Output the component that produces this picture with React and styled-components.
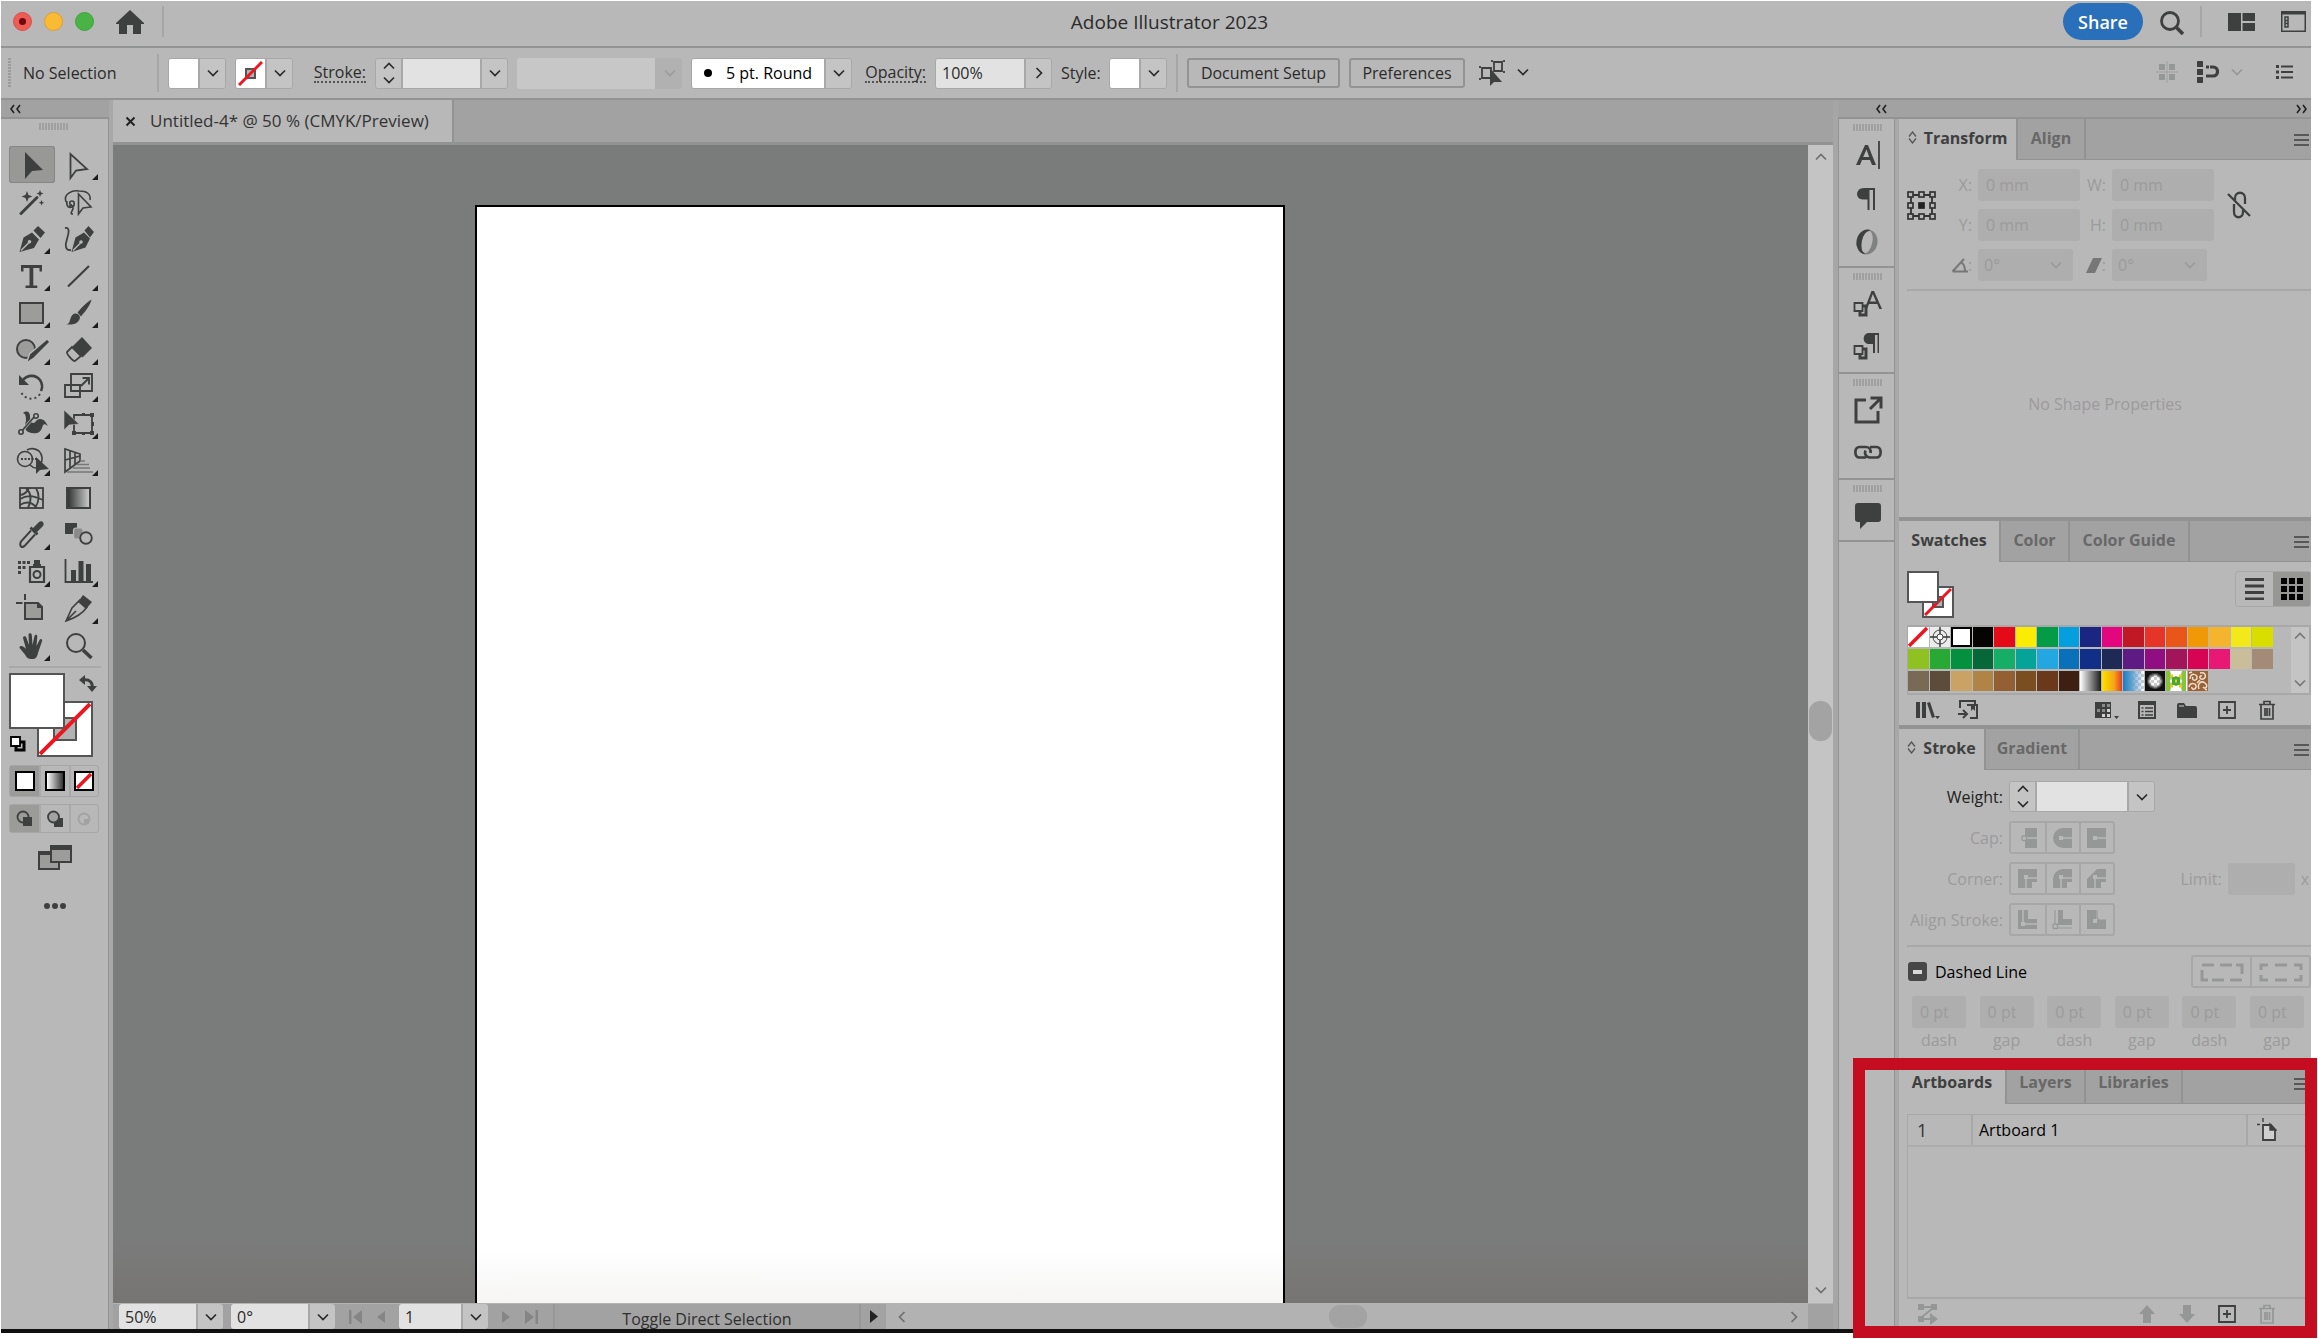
import React from "react";
import styled, { createGlobalStyle, css } from "styled-components";

const c = {
  base: "#b8b8b8",
  strip: "#a2a2a2",
  line: "#929493",
  soft: "#a8a8a8",
  ink: "#3e403f",
  field: "#e2e2e2",
  button: "#c4c4c4",
  faint: "#9b9b9b",
  canvas: "#7a7c7b",
  red: "#ed1620",
};

const Global = createGlobalStyle`
  * { box-sizing: border-box; }
  body { margin: 0; background: #fff; font-family: "Open Sans", "Noto Sans", sans-serif; font-size: 16px; line-height: 20px; color: #2b2b2b; }
  button, input, select { font: inherit; color: inherit; margin: 0; padding: 0; border: 0; background: none; border-radius: 0; }
  svg { display: block; flex: none; }
`;

/* ---------- frame ---------- */
const Screen = styled.div`
  position: relative;
  height: 100vh;
  padding: 1px 7px 6px 1px;
  display: flex;
  flex-direction: column;
  overflow: hidden;
`;
const Frame = styled.div`
  flex: 1;
  min-height: 0;
  display: flex;
  flex-direction: column;
  background: ${c.base};
  border-bottom: 4px solid #101010;
`;
const TitleBar = styled.header`
  height: 47px;
  display: flex;
  align-items: center;
  padding: 0 5px 4px 12px;
  border-bottom: 2px solid ${c.line};
`;
const TitleSide = styled.div`
  flex: 1;
  display: flex;
  align-items: center;
  justify-content: ${(p) => (p.$end ? "flex-end" : "flex-start")};
`;
const Title = styled.h1`
  margin: 0;
  font-size: 19px;
  font-weight: 400;
  line-height: 24px;
  padding-left: 20px;
`;
const Light = styled.button`
  width: 19px;
  height: 19px;
  margin-right: 12px;
  border-radius: 50%;
  background: ${(p) => p.$color};
  border: 1px solid ${(p) => p.$edge};
  display: grid;
  place-items: center;
  &::after {
    content: "";
    width: 7px;
    height: 7px;
    border-radius: 50%;
    background: ${(p) => p.$dot || "transparent"};
  }
`;
const Bare = styled.button`
  display: grid;
  place-items: center;
  min-width: ${(p) => p.$w || 24}px;
  height: ${(p) => p.$h || 24}px;
  color: ${(p) => (p.$dim ? "#959796" : c.ink)};
`;
const Rule = styled.span`
  width: 2px;
  height: ${(p) => p.$h}px;
  background: #a6a6a6;
`;
const Share = styled.button`
  width: 80px;
  height: 37px;
  border-radius: 19px;
  background: #2a6fba;
  color: #fff;
  font-size: 18px;
  font-weight: 600;
  margin-right: 16px;
`;
const HomeButton = styled(Bare)`margin: 0 18px 0 10px;`;
const SideRule = styled(Rule)`margin: 0 26px 0 16px;`;
const LastBare = styled(Bare)`margin-left: 26px;`;

/* ---------- control bar ---------- */
const ControlBar = styled.div`
  height: 52px;
  display: flex;
  align-items: center;
  gap: 9px;
  padding: 0 18px 0 7px;
  border-bottom: 2px solid ${c.line};
`;
const VGrip = styled.span`
  width: 3px;
  height: 30px;
  background: repeating-linear-gradient(#9c9c9c 0 2px, transparent 2px 3px);
`;
const Status = styled.span`width: 128px; padding-left: 3px;`;
const BarLabel = styled.label`
  width: ${(p) => p.$w}px;
  text-align: right;
  white-space: nowrap;
  line-height: 18px;
  span { ${(p) => p.$dotted && css`border-bottom: 2px dotted #555; display: inline-block;`} }
`;
const Combo = styled.span`
  display: flex;
  align-items: stretch;
  height: ${(p) => p.$h || 31}px;
  border: ${(p) => (p.$flat ? 0 : 1)}px solid ${c.soft};
  border-radius: 3px;
  overflow: hidden;
  opacity: ${(p) => (p.$off ? 0.8 : 1)};
`;
const Chip = styled.button`
  width: 29px;
  background: #fff;
  display: grid;
  place-items: center;
`;
const Arrow = styled.button`
  width: 27px;
  border-left: 2px solid ${c.soft};
  background: ${(p) => (p.disabled ? "#b0b0b0" : c.button)};
  color: ${(p) => (p.disabled ? "#959595" : "#2b2b2b")};
  display: grid;
  place-items: center;
  ${(p) => p.disabled && css`border-color: #b0b0b0;`}
`;
const Stepper = styled.span`
  width: 27px;
  display: flex;
  flex-direction: column;
  background: ${c.button};
  border-right: 2px solid ${c.soft};
  button { flex: 1; display: grid; place-items: center; }
`;
const Text = styled.input`
  width: ${(p) => p.$w}px;
  padding-left: 6px;
  background: ${c.field};
  &:disabled { background: #cbcbcb; }
`;
const BrushPick = styled.span`
  display: flex;
  align-items: center;
  width: 132px;
  background: #fff;
  color: #000;
  padding-left: 12px;
  gap: 10px;
`;
const BrushSelect = styled.select`
  appearance: none;
  flex: 1;
  font-weight: 500;
  height: 100%;
  padding-left: 4px;
`;
const Outlined = styled.button`
  height: 30px;
  width: ${(p) => p.$w}px;
  border: 2px solid ${c.line};
  border-radius: 3px;
`;
const Fill = styled.span`flex: 1;`;
const BarTools = styled.span`
  display: flex;
  align-items: center;
  gap: 6px;
  padding-bottom: 2px;
`;

/* ---------- workspace ---------- */
const Workspace = styled.div`
  flex: 1;
  min-height: 0;
  display: flex;
`;
const Strip = styled.div`
  height: 19px;
  background: ${c.strip};
  border-bottom: 2px solid ${c.line};
  display: flex;
  align-items: center;
  justify-content: space-between;
  padding: 0 3px 0 ${(p) => p.$pl || 8}px;
`;
const HGrip = styled.span`
  display: block;
  width: 30px;
  height: 7px;
  margin: ${(p) => p.$m || "0 auto"};
  background: repeating-linear-gradient(90deg, #a0a0a0 0 2px, transparent 2px 3px);
`;
const Toolbox = styled.aside`
  width: 112px;
  border-right: 4px solid ${c.soft};
  box-shadow: inset -1px 0 ${c.line};
`;
const ToolGrid = styled.div`
  display: grid;
  grid-template-columns: 48px 48px;
  padding: 16px 0 2px 6px;
`;
const Tool = styled.button`
  position: relative;
  height: 37px;
  display: grid;
  place-items: center;
  color: ${c.ink};
  ${(p) => p.$on && css`background: #989997; box-shadow: inset 0 0 0 1px #858685; border-radius: 3px; margin: 0 0 0 2px;`}
  ${(p) => p.$more && css`&::after {
    content: "";
    position: absolute;
    right: 5px;
    bottom: 3px;
    border: 3px solid #1c1c1c;
    border-top-color: transparent;
    border-left-color: transparent;
  }`}
`;
const ToolRule = styled.div`
  height: 2px;
  background: #a9a9a9;
  margin: 0 8px 5px;
`;
const ColorArea = styled.div`
  position: relative;
  height: 85px;
  margin: 0 8px;
`;
const ColorSquare = styled.button`
  position: absolute;
  left: ${(p) => p.$at}px;
  top: ${(p) => p.$at}px;
  width: ${(p) => p.$s}px;
  height: ${(p) => p.$s}px;
  background: #fff;
  border: 2px solid #555;
`;
const Corner = styled.button`
  position: absolute;
  ${(p) => (p.$top ? "right: 4px; top: 2px;" : "left: 0; bottom: 5px;")}
`;
const ModeRow = styled.div`
  display: grid;
  grid-template-columns: 1fr 1fr 1fr;
  width: 90px;
  height: ${(p) => p.$h}px;
  margin: 7px 0 0 8px;
  border: 1px solid #a6a6a6;
  border-radius: 3px;
`;
const Mode = styled.button`
  display: grid;
  place-items: center;
  color: ${(p) => (p.disabled ? "#a2a2a2" : c.ink)};
  background: ${(p) => (p.$on ? "#9b9b99" : "none")};
  & + & { border-left: 2px solid #a9a9a9; }
`;
const ModeColor = styled.span`
  width: 20px;
  height: 20px;
  border: 2px solid #000;
  background: ${(p) => p.$bg};
`;
const ToolFoot = styled.div`
  display: flex;
  flex-direction: column;
  align-items: center;
  gap: 25px;
  padding-top: 12px;
`;

const Main = styled.main`
  flex: 1;
  min-width: 0;
  display: flex;
  flex-direction: column;
`;
const DocTabs = styled.div`
  height: 45px;
  background: ${c.strip};
  border-bottom: 3px solid ${c.line};
  display: flex;
`;
const DocTab = styled.div`
  width: 341px;
  background: ${c.base};
  border-right: 2px solid ${c.line};
  display: flex;
  align-items: center;
  gap: 14px;
  padding-left: 12px;
  color: #333;
  font-size: 17px;
  font-weight: 500;
  white-space: nowrap;
`;
const View = styled.div`
  flex: 1;
  min-height: 0;
  display: flex;
`;
const Canvas = styled.div`
  flex: 1;
  display: flex;
  padding: 60px 523px 0 362px;
  background: linear-gradient(${c.canvas} 94%, #777574);
`;
const Artboard = styled.div`
  flex: 1;
  background: linear-gradient(#fff 95%, #f6f5f4);
  border: solid #000;
  border-width: 2px 2px 0 2px;
`;
const VScroll = styled.div`
  width: 25px;
  background: #c4c4c4;
  display: flex;
  flex-direction: column;
  align-items: center;
  justify-content: space-between;
  padding: 6px 0 7px;
  color: #6e6e6e;
`;
const Thumb = styled.span`
  width: ${(p) => p.$w}px;
  height: ${(p) => p.$h}px;
  border-radius: 11px;
  background: #a3a3a3;
  margin-bottom: ${(p) => p.$mb || 0}px;
`;
const StatusBar = styled.footer`
  height: 26px;
  display: flex;
  align-items: stretch;
  background: ${c.strip};
  border-top: 1px solid #b4b4b4;
  padding-left: 6px;
`;
const Pages = styled.div`
  display: flex;
  align-items: center;
  justify-content: space-between;
  width: 64px;
  padding: 0 14px;
  color: #858585;
`;
const Hint = styled.div`
  width: 308px;
  margin-left: 1px;
  border: solid #989898;
  border-width: 0 2px;
  text-align: center;
  line-height: 30px;
  color: #2f2f2f;
`;
const Play = styled.button`
  width: 25px;
  display: grid;
  place-items: center;
`;
const StatusCombo = styled(Combo)`margin-right: ${(p) => p.$mr}px;`;
const HScroll = styled.div`
  flex: 1;
  display: flex;
  align-items: center;
  justify-content: space-between;
  padding: 0 7px 0 9px;
  background: #b2b2b2;
  color: #6e6e6e;
`;
const ScrollGap = styled.div`width: 25px; background: ${c.strip};`;

/* ---------- right side ---------- */
const Right = styled.div`
  display: flex;
  flex-direction: column;
  border-left: 5px solid #a6a6a6;
  box-shadow: inset 1px 0 ${c.line};
`;
const RightBody = styled.div`
  flex: 1;
  min-height: 0;
  display: flex;
`;
const Dock = styled.nav`
  width: 61px;
  border-right: 4px solid ${c.soft};
  box-shadow: inset -1px 0 ${c.line};
`;
const DockGroup = styled.div`
  border-bottom: 2px solid ${c.line};
  padding: 5px 0 ${(p) => p.$pb}px 2px;
  display: grid;
  grid-auto-rows: ${(p) => p.$row}px;
  grid-template-rows: 7px;
  row-gap: 6px;
`;
const DockButton = styled.button`
  display: grid;
  place-items: center;
  color: ${c.ink};
`;
const Panels = styled.div`
  width: 412px;
  display: flex;
  flex-direction: column;
`;
const Panel = styled.section`
  display: flex;
  flex-direction: column;
  ${(p) => (p.$grow ? "flex: 1; min-height: 0;" : css`border-bottom: 4px solid ${c.line};`)}
  ${(p) => p.$h && css`height: ${p.$h}px;`}
`;
const Tabs = styled.div`
  height: 41px;
  flex: none;
  display: flex;
  background: ${c.strip};
  box-shadow: inset 0 -1px ${c.line};
`;
const Tab = styled.button`
  display: flex;
  align-items: center;
  justify-content: center;
  gap: 7px;
  width: ${(p) => p.$w}px;
  padding-bottom: 4px;
  border-right: 2px solid ${c.line};
  font-weight: 700;
  color: ${(p) => (p.$on ? c.ink : "#686868")};
  ${(p) => p.$on && css`background: ${c.base};`}
`;
const Menu = styled.button`
  margin-left: auto;
  width: 17px;
`;
const Faint = styled.label`
  color: ${c.faint};
  text-align: right;
  padding-right: 6px;
  display: flex;
  align-items: center;
  justify-content: flex-end;
  white-space: nowrap;
`;
const TransformGrid = styled.div`
  display: grid;
  grid-template-columns: 29px 42px 102px 32px 102px 1fr;
  grid-auto-rows: 32px;
  row-gap: 8px;
  margin-left: 8px;
  padding: 9px 0 8px;
  border-bottom: 2px solid ${c.soft};
`;
const Ref = styled.button`
  grid-row: 1 / 3;
  display: grid;
  place-items: center;
`;
const LinkCell = styled.button`
  grid-row: 1 / 3;
  grid-column: 6;
  justify-self: start;
  padding-left: 13px;
`;
const Dead = styled.input`
  width: ${(p) => p.$w || 102}px;
  height: 32px;
  background: #aeaeae;
  border-radius: 3px;
  color: ${c.faint};
  padding-left: 8px;
`;
const SelectWrap = styled.span`
  display: grid;
  width: 95px;
  align-items: center;
  background: #aeaeae;
  border-radius: 3px;
  color: ${c.faint};
  select, svg { grid-area: 1 / 1; }
  select { appearance: none; height: 32px; padding-left: 6px; opacity: 1; }
  svg { justify-self: end; margin-right: 10px; pointer-events: none; }
`;
const Pad = styled.span`grid-column: 1;`;
const Empty = styled.p`
  flex: 1;
  margin: 0;
  display: grid;
  place-items: center;
  color: ${c.faint};
`;
const SwatchHead = styled.div`
  display: flex;
  justify-content: space-between;
  padding: 9px 0 7px 8px;
`;
const MiniColors = styled.div`
  position: relative;
  width: 47px;
  height: 47px;
`;
const ViewToggle = styled.div`
  display: flex;
  height: 36px;
  border: 1px solid ${c.soft};
  border-radius: 3px;
`;
const ViewButton = styled.button`
  width: 37px;
  display: grid;
  place-items: center;
  background: ${(p) => (p.$on ? "#979795" : "none")};
`;
const SwatchBox = styled.div`
  display: flex;
  justify-content: space-between;
  height: 70px;
  margin-left: 8px;
  border: 2px solid ${c.soft};
  border-width: 2px 2px 2px 1px;
`;
const SwatchGrid = styled.div`
  display: grid;
  grid-template-columns: repeat(17, 1fr);
  grid-auto-rows: 20px;
  column-gap: 1px;
  row-gap: 2px;
  width: 365px;
`;
const Swatch = styled.button`
  background: ${(p) => p.$bg};
  ${(p) => p.$on && css`border: 2px solid #000;`}
`;
const SwatchScroll = styled.div`
  width: 18px;
  background: ${c.button};
  color: #777;
  display: flex;
  flex-direction: column;
  align-items: center;
  justify-content: space-between;
  padding: 3px 0 4px;
`;
const PanelFoot = styled.div`
  display: flex;
  align-items: center;
  gap: 16px;
  height: 30px;
  padding: 0 32px 0 17px;
`;
const StrokeRows = styled.div`
  display: grid;
  grid-template-columns: 102px auto 1fr auto;
  grid-auto-rows: 33px;
  row-gap: 8px;
  align-items: center;
  margin-left: 8px;
  padding: 10px 0 9px;
  border-bottom: 2px solid ${c.soft};
  & > :first-child { color: #222; }
`;
const RowLabel = styled(Faint)`margin-left: -8px;`;
const Wide = styled.div`grid-column: 2 / 5; display: flex;`;
const Trio = styled.div`
  display: flex;
  height: 33px;
  border: 2px solid #a7a7a7;
  border-radius: 3px;
  color: #969897;
`;
const TrioButton = styled.button`
  width: ${(p) => p.$w || 34}px;
  display: grid;
  place-items: center;
  & + & { border-left: 2px solid #a7a7a7; }
`;
const Limit = styled.div`
  grid-column: 4;
  display: flex;
  align-items: center;
  color: ${c.faint};
  gap: 6px;
  padding-right: 2px;
`;
const DashHead = styled.div`
  display: flex;
  align-items: center;
  justify-content: space-between;
  padding: 8px 0 8px 9px;
`;
const CheckLabel = styled.label`
  display: flex;
  align-items: center;
  gap: 8px;
  color: #000;
`;
const Check = styled.input`
  appearance: none;
  width: 19px;
  height: 19px;
  border-radius: 3px;
  background: #474747;
  display: grid;
  place-items: center;
  &::after { content: ""; width: 9px; height: 4px; background: #d8d8d8; }
`;
const Dashes = styled.div`
  display: grid;
  grid-template-columns: repeat(6, 54px);
  justify-content: space-between;
  padding: 0 7px 9px 13px;
`;
const Dash = styled.label`
  display: flex;
  flex-direction: column;
  align-items: center;
  gap: 2px;
  color: ${c.faint};
`;
const List = styled.table`
  margin: 10px 0 0 8px;
  border: 1px solid ${c.soft};
  border-width: 1px 0 2px 1px;
  border-spacing: 0;
  flex: 1;
  display: flex;
  flex-direction: column;
  tbody { display: block; }
  tr { display: flex; height: 32px; border-bottom: 2px solid #acacac; }
  td { padding: 0 9px; line-height: 31px; color: #000; }
  td:nth-child(1) { width: 63px; color: #333; font-size: 18px; }
  td:nth-child(2) { flex: 1; border: 2px solid ${c.soft}; border-width: 0 2px; padding-left: 6px; }
  td:nth-child(3) { width: 63px; padding-top: 3px; }
`;
const Highlight = styled.div`
  position: absolute;
  right: 1px;
  bottom: 1px;
  width: 464px;
  height: 280px;
  border: 12px solid #c40d20;
  pointer-events: none;
`;

/* ---------- drawings ---------- */
const Svg = ({ w = 30, h = w, vb, children, ...rest }) => (
  <svg width={w} height={h} viewBox={vb || `0 0 ${w} ${h}`} fill="none" stroke="none" aria-hidden="true" {...rest}>{children}</svg>
);
const Chev = ({ d = "down", s = 14 }) => {
  const r = { down: 0, up: 180, left: 90, right: -90 }[d];
  return <Svg w={s} h={s === 14 ? 12 : s} vb="0 0 12 12"><path d="M1 3.500 6 8.500l5-5" stroke="currentColor" strokeWidth="1.700" transform={`rotate(${r} 6 6)`} /></Svg>;
};
const Double = ({ flip }) => (
  <Svg w={12} h={10}><path d="M5 1 2 5l3 4M11 1 8 5l3 4" stroke="#222" strokeWidth="1.600" transform={flip ? "rotate(180 6 5)" : undefined} /></Svg>
);
const MenuIcon = () => <Svg w={15} h={12}><path d="M0 1h15M0 6h15M0 11h15" stroke={c.ink} strokeWidth="1.600" /></Svg>;
const Sort = () => <Svg w={9} h={13}><path d="M1 5.500 4.500 1 8 5.500M1 7.500 4.500 12 8 7.500" stroke="#555" strokeWidth="1.300" /></Svg>;
const NoneMark = ({ s, sq = s * 0.34 }) => (
  <Svg w={s}>
    <rect x={(s - sq) / 2} y={(s - sq) / 2} width={sq} height={sq} fill="#b2b2b2" stroke="#555" strokeWidth="2" />
    <path d={`M1 ${s - 1} ${s - 1} 1`} stroke={c.red} strokeWidth={s > 40 ? 4 : 3} />
  </Svg>
);
const Slash = ({ s }) => <Svg w={s}><path d={`M1 ${s - 1} ${s - 1} 1`} stroke={c.red} strokeWidth="3.500" /></Svg>;
const K = "currentColor";

const tools = [
  ["Selection", 0, <path d="M8 2v27l7-8 11-1z" fill={K} />],
  ["Direct Selection", 1, <path d="M6.500 4v24l5.500-7.500 11-1.500z" stroke={K} strokeWidth="1.800" />],
  ["Magic Wand", 0, <g><path d="M5 26.500 21 10.500" stroke={K} strokeWidth="3" strokeLinecap="round" /><path d="m11 4 1.500 4 4 1.500-4 1.500L11 15l-1.500-4-4-1.500 4-1.500zM24 3l1 2.500 2.500 1L25 7.500 24 10l-1-2.500-2.500-1 2.500-1zM25.500 13l.8 2 2 .8-2 .8-.8 2-.8-2-2-.8 2-.8z" fill={K} /></g>],
  ["Lasso", 0, <g stroke={K} strokeWidth="1.600"><path d="M2 15C-1 7 8 3 15 4c8 0 12 3 11 9M3 14c-1 6 2 7 5 6s3-6 0-6-3 4 0 4M5 19c4-2 5 2 3 5s0 3 1 3" /><path d="M14.500 7v20l4.500-6 8-1z" fill={c.base} /></g>],
  ["Pen", 1, <g><path d="m3.500 28 4-14.500L16 8.500l7 7-5 8.500zM17.500 6.500 22 2l7 6.500-4.500 5.500z" fill={K} /><path d="m5 26.500 8-8" stroke={c.base} strokeWidth="1.500" /><circle cx="13.500" cy="17.800" r="1.800" fill={c.base} /></g>],
  ["Curvature", 0, <g><path d="m7.500 28 4-14.500L20 8.500l6 6-4.500 9zM20.500 6.500 24.500 2l5.500 6-4 5.500z" fill={K} /><path d="m9 26.500 7.500-7.500" stroke={c.base} strokeWidth="1.500" /><circle cx="17" cy="18" r="1.800" fill={c.base} /><path d="M1 4c5-1 4 5 2 11S1 27 7 26" stroke={K} strokeWidth="1.800" /></g>],
  ["Type", 1, <path d="M5 4h21v6.500h-2.500V7h-6.200v17.500h4V27H9.500v-2.500h4V7H7.500v3.500H5z" fill={K} />],
  ["Line Segment", 1, <path d="M4 25.500 25 5" stroke={K} strokeWidth="2.200" />],
  ["Rectangle", 1, <rect x="4" y="5" width="23" height="20" fill="#9c9d9b" stroke={K} strokeWidth="2" />],
  ["Paintbrush", 1, <g><path d="M27.500 1.500c-5 3-10 8-14 13l3.500 4C21 13.500 26 8 27.500 1.500z" fill={K} /><path d="M11.500 15.500c4 0 6 4 3 7.500-3 4-8 3.500-12 3.500 3-1 3-3 4-6 .8-3 2.500-5 5-5z" fill={K} /></g>],
  ["Shaper", 1, <g><circle cx="10" cy="14" r="9" fill="#9c9d9b" stroke={K} strokeWidth="2" /><path d="m10.500 28 3-9L31 4l3 3-16 16z" fill={K} stroke={c.base} strokeWidth="1.400" /></g>],
  ["Eraser", 1, <g><path d="M18 2 28 13l-9.500 9.500L8 12z" fill={K} /><path d="m8 12-5 5c-.6 2 6 9.500 8 9l6-5z" stroke={K} strokeWidth="1.800" /></g>],
  ["Rotate", 1, <g><path d="M7 8c5-6 13-5 17 0 2 3 3 7 1 11" stroke={K} strokeWidth="2.600" /><path d="M3 3v10h10z" fill={K} /><path d="M24 22C19 29 9 28 5 20" stroke={K} strokeWidth="2" strokeDasharray="2 3" /></g>],
  ["Scale", 1, <g stroke={K} strokeWidth="1.900"><path d="M7 2h21v17H7zM1 13h15v12H1zM17 14l7-7M18.500 6h6.500v6.500" /></g>],
  ["Width", 1, <g><path d="M7 4c4-3 7-1 7 3 0 4 1 7 3 7 3 0 3-4 7-4 5 0 6 4 8 7-4-3-5-2-6 2-2 5-6 6-10 5-9-1-7-8-6-12 0-4 0-7-3-8z" fill={K} /><path d="m4 24 15-17" stroke={c.base} strokeWidth="3" /><path d="m4 24 15-17" stroke={K} strokeWidth="1.700" /><circle cx="5" cy="23" r="2.200" fill={c.base} stroke={K} strokeWidth="1.600" /><circle cx="20" cy="7" r="2.200" fill={c.base} stroke={K} strokeWidth="1.600" /></g>],
  ["Free Transform", 1, <g><path d="M10 6h18v18H10z" stroke={K} strokeWidth="1.800" /><path d="M0 1v20l5-5 10-1z" fill={K} stroke={c.base} strokeWidth=".6" /><path d="M18 4h3v3h-3zM26 4h4v4h-4zM26 22h4v4h-4zM18 23h3v3h-3zM8 22h4v4H8zM28 13h2v4h-2z" fill={K} /></g>],
  ["Shape Builder", 1, <g><circle cx="9" cy="13" r="7.500" stroke={K} strokeWidth="1.600" /><path d="M11 4c3-2 8-2 12 1 4 4 4 10 1 14M14 19c2 2 4 3 6 3" stroke={K} strokeWidth="1.600" /><path d="M5 13h15" stroke={K} strokeWidth="2" strokeDasharray="2 1.500" /><path d="M20 11v17l4-4 9-1z" fill={K} /></g>],
  ["Perspective Grid", 1, <g stroke={K} strokeWidth="1.700"><path d="M1 3v23l15-11V8zM1 14l15-4M6 5v17M11 6.500V19" /><path d="M16 15h5M13 18.500h12M9 22h17M3 26h26" stroke="#777" /></g>],
  ["Mesh", 0, <g stroke={K} strokeWidth="1.800"><rect x="4" y="5" width="23" height="20" /><path d="M4 16c8-5 14-3 23 1M4 22c6-4 12-3 17 3M10 5c6 6 6 12 2 20M20 5c4 7 3 14-1 20M4 12c5 0 7-3 9-7" /></g>],
  ["Gradient", 0, <g><defs><linearGradient id="tg"><stop stopColor="#2c2e2d" /><stop offset="1" stopColor="#d0d0d0" /></linearGradient></defs><rect x="3" y="5" width="23" height="20" fill="url(#tg)" stroke={K} strokeWidth="2" /></g>],
  ["Eyedropper", 1, <g><path d="m17 8 6-6c3-2 6 1 4 4l-6 6 1.500 1.500-2 2-7-7 2-2z" fill={K} /><path d="m15 10.500-10 11c-1 2-1 4 0 5s3 0 4-1l10-11" stroke={K} strokeWidth="1.900" /></g>],
  ["Blend", 0, <g><path d="M1 3h12v11H1z" fill={K} /><path d="M9.500 10.500q0-2.500 2.500-2.500h4.500q2.500 0 2.500 2.500v6q0 2.500-2.500 2.500H12q-2.500 0-2.500-2.500z" fill="#8a8a8a" stroke={c.base} strokeWidth="1.200" /><circle cx="22" cy="18" r="5.800" fill={c.base} stroke={K} strokeWidth="1.900" /></g>],
  ["Symbol Sprayer", 1, <g><path d="M14 10h14v15H14zM17 8h8" stroke={K} strokeWidth="2.200" /><circle cx="21" cy="17.500" r="3.500" stroke={K} strokeWidth="2" /><path d="M18 3h6v4h-6zM2 4h3v3H2zM6.500 4h3v3h-3zM11 4h3v3h-3zM2 9h3v3H2zM6.500 9h3v3h-3zM2 14h3v3H2z" fill={K} /></g>],
  ["Column Graph", 1, <g><path d="M1.500 2v23H29" stroke={K} strokeWidth="1.800" /><path d="M7 13h5v11H7zM14.500 4h5v20h-5zM22 7h5v17h-5z" fill={K} /></g>],
  ["Artboard", 0, <g><path d="M9 9h13l4 4v12H9z" fill="#9c9d9b" stroke={K} strokeWidth="2" /><path d="m21 8 6 6h-6z" fill={K} /><path d="M9 0v6M0 9h6.500" stroke={K} strokeWidth="2" /></g>],
  ["Slice", 1, <g><path d="m2 27 6-13 8-8 7 7c-4 6-12 11-21 14zM3 26l9-9" stroke={K} strokeWidth="1.600" /><path d="m19 1 9 7-6 7-8-7z" fill={K} /></g>],
  ["Hand", 1, <path d="M5 15c2 0 4 1.500 5 3L7 7c0-2 2.500-2.500 3.300-.5L13 14 12.500 4c0-2.500 3-2.500 3.300 0L16.500 14l2-9c.5-2 3-1.500 2.800.5L20.500 15l3-6c1-1.800 3.200-1 2.600 1L22 22c-1 4-2 6-6 6s-5-1-7-4.500L4 17.500c-1-1-.5-2.500 1-2.500z" fill={K} />],
  ["Zoom", 0, <g stroke={K}><circle cx="12" cy="12" r="9" strokeWidth="2" /><path d="m19 19 8.500 8" strokeWidth="3.600" /></g>],
];

const pilcrow = "M11 4h11v22h-2V6h-3.500v20h-2V15.500H10C2 15.500 2 4 11 4z";
const Layers = () => <g><path d="M7 16v9h6v-9z" fill={c.base} stroke={K} strokeWidth="3" /><path d="M1.500 13h8v8h-8z" fill={c.base} stroke={K} strokeWidth="1.800" /></g>;
const docks = [
  { row: 37, pb: 6, items: [
    ["Character", <Svg w={30}><path d="M3 24 12 4h3l8 20h-4l-2-5H9l-2 5zM10.200 16h6L13.500 8.500z" fill={K} fillRule="evenodd" /><path d="M26 0v28" stroke={K} strokeWidth="1.800" /></Svg>],
    ["Paragraph", <Svg w={30}><path d={pilcrow} fill={K} /></Svg>],
    ["OpenType", <Svg w={30}>
      <defs><clipPath id="ol"><path d="M0 0h17.500L11 30H0z" /></clipPath><clipPath id="or"><path d="M17.500 0H30v30H11z" /></clipPath></defs>
      <g transform="rotate(12 14 15)" fillRule="evenodd">
        <path d="M14 2.500a10.500 12.500 0 1 0 0 25 10.500 12.500 0 0 0 0-25zm0 1.200a5.300 11.300 0 1 1 0 22.600 5.300 11.300 0 0 1 0-22.600z" fill="#808281" />
        <path d="M14 2.500a10.500 12.500 0 1 0 0 25v-1.200a5.300 11.300 0 0 1 0-22.600z" fill={K} />
      </g>
    </Svg>],
  ] },
  { row: 37, pb: 6, items: [
    ["Character Styles", <Svg w={30}><Layers /><path d="M12 18 18.500 1H21l8 18h-2.700l-2-5H16l-1.500 4zM17 11.500h6L19.800 4z" fill={K} fillRule="evenodd" /></Svg>],
    ["Paragraph Styles", <Svg w={30}><Layers /><path d="M16 0h10v20h-1.500V2H22v18h-2V11h-4c-7 0-7-11 0-11z" fill={K} /></Svg>],
  ] },
  { row: 36, pb: 8, items: [
    ["Asset Export", <Svg w={30}><path d="M13 5H3v22h22V16M17 14 27 4M17.500 3H28v10.500" stroke={K} strokeWidth="3" /></Svg>],
    ["Links", <Svg w={30} overflow="visible"><path d="M13 20.500H6.500C1 20.500 1 10 6.500 10H13c4 0 5 3 4.500 6M17 10h6.500C29 10 29 20.500 23.500 20.500H17c-4 0-6-4-4.500-7" stroke={K} strokeWidth="2.700" /></Svg>],
  ] },
  { row: 36, pb: 6, items: [
    ["Comments", <Svg w={30}><path d="M5 2h20q3 0 3 3v13q0 3-3 3h-11l-7 7v-7H5q-3 0-3-3V5q0-3 3-3z" fill={K} /></Svg>],
  ] },
];

const checker = "repeating-conic-gradient(#ccc 0 25%, #fff 0 50%) 0 0/6px 6px";
const swatches = [
  "#fff", "#ececec", "#fff", "#060303", "#e50a17", "#fbec04", "#049b47", "#059fe0", "#1b2682", "#e4067e", "#c01825", "#e63428", "#e8561a", "#f19806", "#f5b42e", "#f3e81a", "#dade00",
  "#8fc220", "#28a936", "#039140", "#066738", "#16ad67", "#04a499", "#22a7e0", "#0a70b8", "#122f87", "#1f2955", "#5e1b83", "#900e82", "#a2155a", "#d60452", "#e71975", "#cabd9a", "#a38b77",
  "#796a55", "#5d4b3c", "#cba265", "#b08346", "#936034", "#7b4e22", "#6a381b", "#3e2012",
  "linear-gradient(90deg,#fff,#1c1c1c)", "linear-gradient(90deg,#fbe200,#f4a716 60%,#e53c24)", `linear-gradient(90deg,#1b7cc4,#5f9fd0 40%,transparent), ${checker}`,
  `radial-gradient(circle,transparent 30%,#111 60%), ${checker}`, "#fff", "#9a6236",
];

const marks = {
  0: <Slash s={20} />,
  1: <Svg w={20}><path d="M10 0v20M0 10h20" stroke="#333" strokeWidth="1.400" /><circle cx="10" cy="10" r="7" stroke="#444" /><circle cx="10" cy="10" r="3" stroke="#444" fill="#fff" /></Svg>,
  46: <Svg w={20}><path d="M0 0h4q2 5 0 10 2 5 0 10H0zM20 0h-4q-2 5 0 10-2 5 0 10h4z" fill="#86c440" /><path d="m5 5 3 1 2-1 2 1 3-1-1 5 1 5-3-1-2 1-2-1-3 1 1-5z" fill="#4aa832" /><path d="M4 5h3M13 5h3M4 15h3M13 15h3M9 10h2" stroke="#e8c820" strokeWidth="3" /></Svg>,
  47: <Svg w={20}><path d="M2 8c0-7 8-5 7-1S3 9 5 6M12 2c6-2 7 5 3 6s-4-4-1-3M1 16c1-5 8-4 7 0s-5 2-4 0M11 18c-2-5 2-9 6-6s0 7-2 4M9 12l3-3M17 18l2 1M1 2l3-1" stroke="#f0dfcc" strokeWidth="1.500" /></Svg>,
};

const NewIcon = () => <Svg w={18}><path d="M1 1h16v16H1zM9 5v8M5 9h8" stroke={c.ink} strokeWidth="1.800" /></Svg>;
const Trash = () => <Svg w={18} h={20}><path d="M1 4.500h16M6 4V1.500h6V4M3 5v14h12V5M7 8v8M9 8v8M11.500 8v8" stroke={K} strokeWidth="1.700" /></Svg>;

const cap = [
  { fill: "M8 3h12v20H8z", cut: "M8 13h13", ring: [5, 11] },
  { fill: "M11 3h9v20h-9a10 10 0 0 1 0-20z", cut: "M10 13h11", dot: [7, 11] },
  { fill: "M1 3h19v20H1z", cut: "M10 13h11", dot: [7, 11] },
];
const corner = [
  { fill: "M1 3h19v13h-5v6H1z", cut: "M9 12h12M9 12v11", dot: [7, 9] },
  { fill: "M11 3h9v13h-5v6H1v-9A10 10 0 0 1 11 3z", cut: "M9 12h12M9 12v11", dot: [7, 9] },
  { fill: "M11 3h9v13h-5v6H1v-9z", cut: "M9 12h12M9 12v11", dot: [7, 9] },
];
const align = [
  { fill: "M1 3h10v9h9v10H1z", cut: "M6 3v14h15", dot: [4, 15] },
  { fill: "M6 3h5v9h9v6H6z", thin: "M3 3v14M5 21h15", ring: [1, 17] },
  { fill: "M1 3h9v10h10v9H1z", cut: "M9 12v3", thin: "M11 3v8l2 2h7", dot: [7, 12] },
];

const Icons3 = ({ glyphs, label }) => (
  <Trio>
    {glyphs.map((g, i) => (
      <TrioButton key={i} aria-label={`${label} ${i + 1}`}>
        <Svg w={22} h={26}>
          <path d={g.fill} fill={K} />
          {g.cut && <path d={g.cut} stroke={c.base} strokeWidth="1.500" />}
          {g.thin && <path d={g.thin} stroke={K} strokeWidth="1.200" />}
          {g.dot && <rect x={g.dot[0]} y={g.dot[1]} width="4" height="4" fill={c.base} />}
          {g.ring && <rect x={g.ring[0]} y={g.ring[1]} width="4.500" height="4.500" rx="1" fill={c.base} stroke={K} strokeWidth="1.300" />}
        </Svg>
      </TrioButton>
    ))}
  </Trio>
);

const TabRow = ({ items }) => (
  <Tabs role="tablist">
    {items.map(([name, w, sort], i) => (
      <Tab key={name} role="tab" $w={w} $on={i === 0}>{sort && <Sort />}{name}</Tab>
    ))}
    <Menu aria-label="Panel menu"><MenuIcon /></Menu>
  </Tabs>
);

export default function App() {
  return (
    <Screen>
      <Global />
      <Frame>
        <TitleBar>
          <TitleSide>
            <Light aria-label="Close" $color="#ed5d56" $edge="#de4b46" $dot="#6d0a0c" />
            <Light aria-label="Minimise" $color="#f9bb33" $edge="#e0a12d" />
            <Light aria-label="Full screen" $color="#49b445" $edge="#3ba53a" />
            <HomeButton aria-label="Home" $w={28}><Svg w={28} h={24}><path d="M14 0 28 13v1h-3v10h-8v-9h-6v9H3V14H0v-1z" fill={K} /></Svg></HomeButton>
            <Rule $h={31} />
          </TitleSide>
          <Title>Adobe Illustrator 2023</Title>
          <TitleSide $end>
            <Share>Share</Share>
            <Bare aria-label="Search"><Svg w={25}><circle cx="11" cy="11" r="8.500" stroke={K} strokeWidth="2.800" /><path d="m17 17 7 7" stroke={K} strokeWidth="3.600" /></Svg></Bare>
            <SideRule $h={31} />
            <Bare aria-label="Arrange documents"><Svg w={27} h={18}><path d="M0 0h13v18H0zM14.500 0H27v8H14.500zM14.500 10H27v8H14.500z" fill={K} /></Svg></Bare>
            <LastBare aria-label="Switch workspace"><Svg w={25} h={21}><path d="M0 0h25v21H0zM1.500 3.500v16h22v-16z" fill={K} fillRule="evenodd" /><path d="M4 6h3v10H4z" stroke={K} strokeWidth="1.500" /><path d="M4 9.500h3M4 12.500h3" stroke={K} strokeWidth="1.500" /></Svg></LastBare>
          </TitleSide>
        </TitleBar>

        <ControlBar>
          <VGrip />
          <Status>No Selection</Status>
          <Rule $h={38} />
          <Combo><Chip aria-label="Fill" /><Arrow aria-label="Fill options"><Chev /></Arrow></Combo>
          <Combo><Chip aria-label="Stroke colour"><NoneMark s={25} sq={9} /></Chip><Arrow aria-label="Stroke options"><Chev /></Arrow></Combo>
          <BarLabel $w={64} $dotted htmlFor="sw"><span>Stroke:</span></BarLabel>
          <Combo>
            <Stepper><button aria-label="Increase"><Chev d="up" /></button><button aria-label="Decrease"><Chev /></button></Stepper>
            <Text id="sw" $w={77} /><Arrow aria-label="Stroke weights"><Chev /></Arrow>
          </Combo>
          <Combo $flat $off><Text aria-label="Width profile" disabled $w={138} /><Arrow disabled aria-label="Profiles"><Chev /></Arrow></Combo>
          <Combo>
            <BrushPick><Svg w={8}><circle cx="4" cy="4" r="4" fill="#000" /></Svg><BrushSelect aria-label="Brush"><option>5 pt. Round</option></BrushSelect></BrushPick>
            <Arrow aria-label="Brushes"><Chev /></Arrow>
          </Combo>
          <BarLabel $w={65} $dotted htmlFor="op"><span>Opacity:</span></BarLabel>
          <Combo><Text id="op" $w={88} defaultValue="100%" /><Arrow aria-label="Opacity slider"><Chev d="right" /></Arrow></Combo>
          <BarLabel $w={39}>Style:</BarLabel>
          <Combo><Chip aria-label="Style" /><Arrow aria-label="Styles"><Chev /></Arrow></Combo>
          <Rule $h={38} />
          <Outlined $w={153}>Document Setup</Outlined>
          <Outlined $w={116}>Preferences</Outlined>
          <BarTools>
            <Bare $w={36} aria-label="Select similar"><Svg w={26} h={26}><path d="M3 8h9v10H3zM15 2h8v9h-8zM1 6v2M1 18v2M25 0v2M25 11v2M13 0v2" stroke={K} strokeWidth="1.800" /><path d="M11 8v18l4-4h8z" fill={K} /></Svg></Bare>
            <Chev />
          </BarTools>
          <Fill />
          <BarTools>
            <Bare $dim $w={38} aria-label="Align to pixel"><Svg w={22}><path d="M0 11h22M11 0v22" stroke="#a6a6a6" strokeWidth="1.500" /><path d="M3 3h6v6H3zM13 3h6v6h-6zM3 13h6v6H3zM13 13h6v6h-6z" fill={K} /></Svg></Bare>
            <Bare $w={32} aria-label="Snap"><Svg w={22}><path d="M0 0h6v6H0zM0 8h6v6H0zM0 16h6v6H0z" fill={K} /><path d="M9 6h7c6 0 6 9 0 9H9" stroke={K} strokeWidth="3.200" strokeDasharray="3 1 30" /></Svg></Bare>
            <Bare $dim $w={12} aria-label="Snap options"><Chev /></Bare>
            <LastBare $w={17} aria-label="Control bar menu"><Svg w={17} h={14}><path d="M0 0h3v3H0zM0 5.500h3v3H0zM0 11h3v3H0z" fill={K} /><path d="M5 1.500h12M5 7h12M5 12.500h12" stroke={K} strokeWidth="2" /></Svg></LastBare>
          </BarTools>
        </ControlBar>

        <Workspace>
          <Toolbox>
            <Strip><Double /></Strip>
            <HGrip $m="4px 0 0 38px" />
            <ToolGrid>
              {tools.map(([name, more, art], i) => (
                <Tool key={name} aria-label={name} $more={more} $on={i === 0}><Svg w={30} overflow="visible">{art}</Svg></Tool>
              ))}
            </ToolGrid>
            <ToolRule />
            <ColorArea>
              <ColorSquare $at={28} $s={56} aria-label="Stroke"><NoneMark s={52} sq={22} /></ColorSquare>
              <ColorSquare $at={0} $s={56} aria-label="Fill" />
              <Corner $top aria-label="Swap"><Svg w={18}><path d="M4 5c7-1 10 3 9 8" stroke={c.ink} strokeWidth="3" /><path d="M0 5 6 0v10zM8 11h10l-5 6z" fill={c.ink} /></Svg></Corner>
              <Corner aria-label="Default"><Svg w={18}><path d="M7 7h8v8H7z" stroke="#000" strokeWidth="3" /><path d="M2 2h9v9H2z" fill="#fff" stroke="#000" strokeWidth="1.800" /></Svg></Corner>
            </ColorArea>
            <ModeRow $h={32}>
              <Mode $on aria-label="Color"><ModeColor $bg="#fff" /></Mode>
              <Mode aria-label="Gradient"><ModeColor $bg="linear-gradient(90deg,#fff,#333)" /></Mode>
              <Mode aria-label="None"><ModeColor $bg="#fff"><Slash s={16} /></ModeColor></Mode>
            </ModeRow>
            <ModeRow $h={29}>
              <Mode $on aria-label="Draw normal"><Svg w={18}><circle cx="7" cy="7" r="5.500" stroke={K} strokeWidth="1.800" /><path d="M7 7h9v9H7z" fill={K} /></Svg></Mode>
              <Mode aria-label="Draw behind"><Svg w={18}><path d="M8 8h9v9H8z" fill={K} /><circle cx="7.500" cy="7" r="5.500" fill="#a2a2a2" stroke={K} strokeWidth="1.800" /></Svg></Mode>
              <Mode disabled aria-label="Draw inside"><Svg w={18}><circle cx="9" cy="9" r="5.500" stroke={K} strokeWidth="1.800" /><path d="M9 9h5v5H9z" fill={K} /></Svg></Mode>
            </ModeRow>
            <ToolFoot>
              <Bare $w={34} aria-label="Screen mode"><Svg w={34} h={26}><path d="M1 7h20v17H1z" fill="#9c9d9b" stroke={K} strokeWidth="2" /><path d="M0 6h22v4H0zM12 0h22v5H12z" fill={K} /><path d="M13 2h20v15H13z" fill="#9c9d9b" stroke={K} strokeWidth="2" /><path d="M12 0h22v5H12z" fill={K} /></Svg></Bare>
              <Bare aria-label="Edit toolbar"><Svg w={22} h={6}><circle cx="3" cy="3" r="3" fill={K} /><circle cx="11" cy="3" r="3" fill={K} /><circle cx="19" cy="3" r="3" fill={K} /></Svg></Bare>
            </ToolFoot>
          </Toolbox>

          <Main>
            <DocTabs>
              <DocTab><Svg w={11}><path d="m1.500 1.500 8 8m0-8-8 8" stroke="#222" strokeWidth="2" /></Svg>Untitled-4* @ 50 % (CMYK/Preview)</DocTab>
            </DocTabs>
            <View>
              <Canvas><Artboard /></Canvas>
              <VScroll><Chev d="up" /><Thumb $w={23} $h={40} $mb={6} /><Chev /></VScroll>
            </View>
            <StatusBar>
              <StatusCombo $mr={8} $h={25} $flat><Text aria-label="Zoom level" $w={77} defaultValue="50%" /><Arrow aria-label="Zoom levels"><Chev /></Arrow></StatusCombo>
              <StatusCombo $mr={0} $h={25} $flat><Text aria-label="Rotation" $w={77} defaultValue="0°" /><Arrow aria-label="Rotations"><Chev /></Arrow></StatusCombo>
              <Pages><Svg w={14}><path d="M0 0h2.500v14H0zM13 0v14L4 7z" fill={K} /></Svg><Svg w={8} h={12}><path d="M8 0v12L0 6z" fill={K} /></Svg></Pages>
              <StatusCombo $mr={0} $h={25} $flat><Text aria-label="Artboard number" $w={62} defaultValue="1" /><Arrow aria-label="Artboards"><Chev /></Arrow></StatusCombo>
              <Pages><Svg w={8} h={12}><path d="M0 0v12l8-6z" fill={K} /></Svg><Svg w={14}><path d="M11.500 0H14v14h-2.500zM1 0v14l9-7z" fill={K} /></Svg></Pages>
              <Hint>Toggle Direct Selection</Hint>
              <Play aria-label="Status menu"><Svg w={8} h={13}><path d="M0 0v13l8-6.500z" fill="#222" /></Svg></Play>
              <HScroll><Chev d="left" /><Thumb $w={38} $h={23} /><Chev d="right" /></HScroll>
              <ScrollGap />
            </StatusBar>
          </Main>

          <Right>
            <Strip $pl={37}><Double /><Double flip /></Strip>
            <RightBody>
              <Dock>
                {docks.map((g) => (
                  <DockGroup key={g.items[0][0]} $row={g.row} $pb={g.pb}>
                    <HGrip />
                    {g.items.map(([name, art]) => <DockButton key={name} aria-label={name}>{art}</DockButton>)}
                  </DockGroup>
                ))}
              </Dock>
              <Panels>
                <Panel $h={402}>
                  <TabRow items={[["Transform", 119, true], ["Align", 68]]} />
                  <TransformGrid>
                    <Ref aria-label="Reference point"><Svg w={29}><path d="M4 4h21v21H4z" stroke="#333" strokeWidth="1.800" />{[0, 11, 22].map((x) => [0, 11, 22].map((y) => <rect key={x + "-" + y} x={x + 1} y={y + 1} width="5" height="5" fill={x === 11 && y === 11 ? "#222" : c.base} stroke={x === 11 && y === 11 ? "#222" : "#333"} strokeWidth="1.700" />))}</Svg></Ref>
                    <Faint htmlFor="tx">X:</Faint><Dead id="tx" disabled defaultValue="0 mm" />
                    <Faint htmlFor="tw">W:</Faint><Dead id="tw" disabled defaultValue="0 mm" />
                    <LinkCell aria-label="Constrain proportions"><Svg w={24} h={28}><path d="M8 10V7c0-7 10-7 10 0v6M7 13v8c0 7 9 7 9 0v-2M1 3l22 22" stroke={c.ink} strokeWidth="2.300" /></Svg></LinkCell>
                    <Faint htmlFor="ty">Y:</Faint><Dead id="ty" disabled defaultValue="0 mm" />
                    <Faint htmlFor="th">H:</Faint><Dead id="th" disabled defaultValue="0 mm" />
                    <Pad />
                    <Faint htmlFor="ta"><Svg w={17} h={15}><path d="M1.500 13.500H17M1.500 13.500 13 1M10 4c3 2 4 6 4 9" stroke="#777" strokeWidth="2" /></Svg>:</Faint>
                    <SelectWrap><select id="ta" disabled><option>0°</option></select><Chev /></SelectWrap>
                    <Faint htmlFor="ts"><Svg w={16} h={15}><path d="M7 0h9L9 15H0z" fill="#777" /></Svg>:</Faint>
                    <SelectWrap><select id="ts" disabled><option>0°</option></select><Chev /></SelectWrap>
                  </TransformGrid>
                  <Empty>No Shape Properties</Empty>
                </Panel>

                <Panel>
                  <TabRow items={[["Swatches", 102], ["Color", 69], ["Color Guide", 120]]} />
                  <SwatchHead>
                    <MiniColors>
                      <ColorSquare $at={15} $s={32} aria-label="Stroke"><NoneMark s={28} sq={10} /></ColorSquare>
                      <ColorSquare $at={0} $s={32} aria-label="Fill" />
                    </MiniColors>
                    <ViewToggle>
                      <ViewButton aria-label="List view"><Svg w={19} h={22}><path d="M0 1.500h19M0 8h19M0 14.500h19M0 21h19" stroke={c.ink} strokeWidth="2.800" /></Svg></ViewButton>
                      <ViewButton $on aria-label="Thumbnail view"><Svg w={22}><path d="M0 0h6v6H0zM8 0h6v6H8zM16 0h6v6h-6zM0 8h6v6H0zM8 8h6v6H8zM16 8h6v6h-6zM0 16h6v6H0zM8 16h6v6H8zM16 16h6v6h-6z" fill="#000" /></Svg></ViewButton>
                    </ViewToggle>
                  </SwatchHead>
                  <SwatchBox>
                    <SwatchGrid>
                      {swatches.map((bg, i) => (
                        <Swatch key={i} $bg={bg} $on={i === 2} aria-label={`Swatch ${i + 1}`}>{marks[i]}</Swatch>
                      ))}
                    </SwatchGrid>
                    <SwatchScroll><Chev d="up" /><Chev /></SwatchScroll>
                  </SwatchBox>
                  <PanelFoot>
                    <Bare aria-label="Libraries"><Svg w={24} h={18}><path d="M0 1h4v16H0zM6 1h4v16H6zM11 2l3-1 5 15-3 1zM19 15h5l-2.500 3z" fill={K} /></Svg></Bare>
                    <Bare aria-label="Add to library"><Svg w={20}><path d="M2 8V1h15v3M9 5h10v13h-7M0 14h8M5 10l4 4-4 4" stroke={K} strokeWidth="2" /><path d="M13 5h4v6l-2-2-2 2z" fill={K} /></Svg></Bare>
                    <Fill />
                    <Bare aria-label="Kinds"><Svg w={24} h={18}><path d="M0 1h16v16H0z" fill={K} /><path d="M7 3h3v3H7zM12 3h3v3h-3zM2 8h3v3H2zM7 8h3v3H7z" fill="#8a8a8a" /><path d="M12 8h3v3h-3zM7 13h3v3H7zM12 13h3v3h-3z" fill="#d0d0d0" /><path d="M19 15h5l-2.500 3z" fill={K} /></Svg></Bare>
                    <Bare aria-label="Swatch options"><Svg w={18}><path d="M1 1h16v16H1zM1 3h16" stroke={K} strokeWidth="2" /><path d="M3.500 7h2M7 7h8M3.500 10.500h2M7 10.500h8M3.500 14h2M7 14h8" stroke={K} strokeWidth="1.600" /></Svg></Bare>
                    <Bare aria-label="New group"><Svg w={20} h={16}><path d="M0 3q0-2 2-2h5l2 3h9q2 0 2 2v10H0z" fill={K} /><path d="M2 4h5" stroke={c.base} strokeWidth="1.200" /></Svg></Bare>
                    <Bare aria-label="New swatch"><NewIcon /></Bare>
                    <Bare aria-label="Delete swatch"><Trash /></Bare>
                  </PanelFoot>
                </Panel>

                <Panel>
                  <TabRow items={[["Stroke", 87, true], ["Gradient", 94]]} />
                  <StrokeRows>
                    <RowLabel as="label" htmlFor="wt">Weight:</RowLabel>
                    <Wide>
                      <Combo>
                        <Stepper><button aria-label="Increase weight"><Chev d="up" /></button><button aria-label="Decrease weight"><Chev /></button></Stepper>
                        <Text id="wt" $w={90} /><Arrow aria-label="Weights"><Chev /></Arrow>
                      </Combo>
                    </Wide>
                    <RowLabel as="span">Cap:</RowLabel><Wide><Icons3 glyphs={cap} label="Cap" /></Wide>
                    <RowLabel as="span">Corner:</RowLabel><Icons3 glyphs={corner} label="Corner" />
                    <Limit><label htmlFor="lim">Limit:</label><Dead id="lim" disabled $w={67} />x</Limit>
                    <RowLabel as="span">Align Stroke:</RowLabel><Wide><Icons3 glyphs={align} label="Align" /></Wide>
                  </StrokeRows>
                  <DashHead>
                    <CheckLabel><Check type="checkbox" />Dashed Line</CheckLabel>
                    <Trio>
                      <TrioButton $w={57} aria-label="Exact dashes"><Svg w={44} h={20}><path d="M2 8v10h6M2 3h12M20 3h12M36 3h6v9M12 18h12M30 18h12" stroke={K} strokeWidth="3" /></Svg></TrioButton>
                      <TrioButton $w={59} aria-label="Aligned dashes"><Svg w={44} h={20}><path d="M9 3H2v5M2 13v5h7M16 3h12M16 18h12M35 3h7v5M42 13v5h-7" stroke={K} strokeWidth="3" /></Svg></TrioButton>
                    </Trio>
                  </DashHead>
                  <Dashes>
                    {["dash", "gap", "dash", "gap", "dash", "gap"].map((n, i) => (
                      <Dash key={i}><Dead disabled $w={54} defaultValue="0 pt" />{n}</Dash>
                    ))}
                  </Dashes>
                </Panel>

                <Panel $grow>
                  <TabRow items={[["Artboards", 108], ["Layers", 79], ["Libraries", 97]]} />
                  <List><tbody><tr><td>1</td><td>Artboard 1</td><td><Svg w={20} h={24}><path d="M6 7h8l4 5v10H6z" fill="#cfcfcf" stroke={c.ink} strokeWidth="1.800" /><path d="m13 6 6 6h-6zM6 0v4M0 6.500h3" fill={c.ink} stroke={c.ink} strokeWidth="1.400" /></Svg></td></tr></tbody></List>
                  <PanelFoot>
                    <Bare $dim aria-label="Rearrange artboards"><Svg w={20} h={22}><path d="M0 1h6v6H0zM13 1h6v6h-6zM0 13h6v6H0zM12 10l8 6-8 6z" fill={K} /><path d="M6 4h7M15 5 4 14M6 16h8" stroke={K} strokeWidth="1.800" /></Svg></Bare>
                    <Fill />
                    <Bare $dim aria-label="Move up"><Svg w={16} h={18}><path d="m8 0 8 9h-4v9H4V9H0z" fill={K} /></Svg></Bare>
                    <Bare $dim aria-label="Move down"><Svg w={16} h={18}><path d="m8 18 8-9h-4V0H4v9H0z" fill={K} /></Svg></Bare>
                    <Bare aria-label="New artboard"><NewIcon /></Bare>
                    <Bare $dim aria-label="Delete artboard"><Trash /></Bare>
                  </PanelFoot>
                </Panel>
              </Panels>
            </RightBody>
          </Right>
        </Workspace>
      </Frame>
      <Highlight />
    </Screen>
  );
}
